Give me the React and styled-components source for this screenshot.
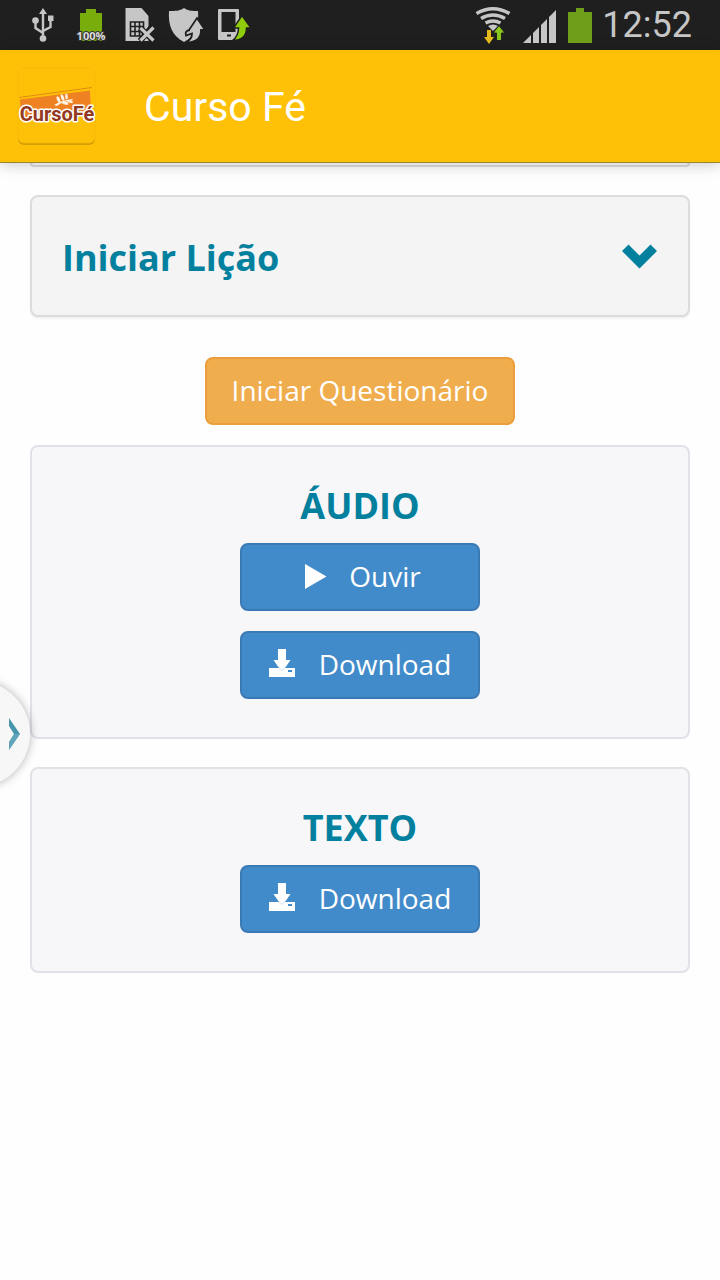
import React from "react";
import styled, { createGlobalStyle } from "styled-components";

const GlobalStyle = createGlobalStyle`
  * { box-sizing: border-box; }
  body {
    margin: 0;
    background: #fefefe;
    font-family: "Open Sans", "Noto Sans", sans-serif;
  }
  button { font-family: inherit; cursor: pointer; }
`;

const TopBars = styled.div`
  position: sticky;
  top: 0;
  z-index: 2;
`;

const StatusBar = styled.div`
  display: flex;
  justify-content: space-between;
  height: 50px;
  padding: 0 28px;
  background: #1f1f1f;
`;

const StatusGroup = styled.div`
  display: flex;
  align-items: center;
  gap: ${(p) => p.$gap}px;
`;

const Clock = styled.time`
  color: #c6c6c6;
  font: 400 36px/48px Roboto, sans-serif;
`;

const AppBar = styled.header`
  display: flex;
  align-items: center;
  gap: 48px;
  height: 113px;
  padding: 2px 16px 0;
  background: #ffc107;
  border-bottom: 1px solid #9c8434;
  box-shadow: 0 2px 14px rgba(0, 0, 0, 0.2);
`;

const AppTitle = styled.h1`
  margin: 0;
  color: #fff;
  font: 400 41px/48px Roboto, sans-serif;
`;

const Content = styled.main`
  padding: 0 30px 30px;
`;

const PreviousPanel = styled.div`
  height: 4px;
  border: 2px solid #dddddf;
  border-top: 0;
  border-radius: 0 0 8px 8px;
`;

const AccordionButton = styled.button`
  display: flex;
  align-items: center;
  justify-content: space-between;
  width: 100%;
  height: 122px;
  margin: 28px 0 40px;
  padding: 2px 30px 0;
  background: #f4f4f4;
  border: 2px solid #dcdcdd;
  border-radius: 8px;
  box-shadow: 0 2px 2px rgba(0, 0, 0, 0.05);
  color: #04809f;
  font-size: 36px;
  font-weight: 700;
`;

const Button = styled.button`
  display: flex;
  align-items: center;
  justify-content: center;
  gap: 22px;
  width: ${(p) => p.$width}px;
  max-width: 100%;
  height: 68px;
  margin: 0 auto;
  padding: 0 0 2px;
  background: ${(p) => (p.$warning ? "#f0ad4e" : "#428bca")};
  border: 2px solid ${(p) => (p.$warning ? "#eb9f3c" : "#3a7ab4")};
  border-radius: 8px;
  color: #fff;
  font-size: 28px;
`;

const MediaPanel = styled.section`
  display: flex;
  flex-direction: column;
  gap: 20px;
  margin-top: ${(p) => p.$space}px;
  padding: 38px 20px;
  background: #f7f7f9;
  border: 2px solid #e1e1e8;
  border-radius: 8px;
`;

const PanelTitle = styled.h2`
  margin: 0 0 -4px;
  color: #04809f;
  font-size: 36px;
  line-height: 42px;
  text-align: center;
`;

const DrawerHandle = styled.button`
  position: fixed;
  left: -76px;
  top: 681px;
  z-index: 1;
  display: flex;
  align-items: center;
  justify-content: flex-end;
  width: 106px;
  height: 106px;
  padding: 0 9px 0 0;
  background: #f7f7f7;
  border: 0;
  border-radius: 50%;
  box-shadow: 0 0 10px rgba(0, 0, 0, 0.3);
`;

const LogoText = styled.text`
  font: 700 20px Roboto, sans-serif;
  fill: #93391f;
  stroke: #fff;
  stroke-width: 3px;
  stroke-linejoin: round;
  paint-order: stroke;
`;

const BatteryText = styled.text`
  font: 700 11px "Open Sans", sans-serif;
  fill: #ddd;
  stroke: #333;
  stroke-width: 2px;
  paint-order: stroke;
`;

const GREY = "#c6c6c6";

const UsbIcon = () => (
  <svg width="48" height="50" viewBox="28 0 48 50" aria-hidden="true">
    <g fill="none" stroke={GREY} strokeWidth="2.4">
      <path d="M43 12V37M43 33L35.500 28V21M43 31L50.500 27V18" />
    </g>
    <path fill={GREY} d="M43 8l4 6h-8zM48 15.500h5.500v5.500H48z" />
    <circle cx="35.500" cy="20.500" r="3.300" fill={GREY} />
    <circle cx="43" cy="38.500" r="3.300" fill={GREY} />
  </svg>
);

const BatteryChargeIcon = () => (
  <svg width="47" height="50" viewBox="76 0 47 50" role="img" aria-label="100%">
    <path fill="#78ad0c" d="M80 13h6V9h10v4h6v28H80z" />
    <BatteryText x="91" y="40" textAnchor="middle">100%</BatteryText>
  </svg>
);

const SimIcon = () => (
  <svg width="45" height="50" viewBox="123 0 45 50" aria-hidden="true">
    <path fill={GREY} d="M125.500 8h16l7 8v25h-23z" />
    <path fill="none" stroke="#1f1f1f" strokeWidth="1.600" d="M130.500 22h13v14h-13zM130.500 26.500h13M130.500 31.500h13M135 22v14M139.500 22v14" />
    <path stroke="#1f1f1f" strokeWidth="6" d="M140 28l13 12M152 27l-12 14" />
    <path stroke={GREY} strokeWidth="3.200" d="M140.500 28l13 12.500M153.500 27.500l-13 13" />
  </svg>
);

const ShieldIcon = () => (
  <svg width="49" height="50" viewBox="168 0 49 50" aria-hidden="true">
    <path fill={GREY} d="M184 8c4 3 9 3 14 3 1 14-2 25-14 31-12-6-16-17-15-31 6 0 11 0 15-3z" />
    <path fill={GREY} stroke="#1f1f1f" strokeWidth="1.800" d="M197 18l8 12h-4c0 8-4 12-15 12.500 4-2 6-5 6-9l-6 2c-1-3 0-5 4-5.500h-1z" />
  </svg>
);

const PhoneIcon = () => (
  <svg width="34" height="50" viewBox="217 0 34 50" aria-hidden="true">
    <path fill={GREY} fillRule="evenodd" d="M219 9h19a1 1 0 0 1 1 1v30h-20a1 1 0 0 1-1-1V10a1 1 0 0 1 1-1zM221.500 12v20h14V12zM227 34.500v2h4v-2z" />
    <path fill="#8fcc0b" stroke="#1f1f1f" strokeWidth="1.500" d="M242 15.500l9 12.500h-4.500c0 8-5 12.500-14 12.500 4-3 6-7 6-12.500h-5z" />
  </svg>
);

const WifiIcon = () => (
  <svg width="38" height="50" viewBox="476 0 38 50" aria-hidden="true">
    <g fill="none" stroke={GREY} strokeWidth="3.400">
      <path d="M478.500 13.500Q495 4 511.500 13.500" />
      <path d="M483 18.500Q495 11.500 507 18.500" />
      <path d="M487.500 23Q495 19 502.500 23" />
    </g>
    <path fill={GREY} d="M490 26q5-3 10 0l-5 5z" />
    <path fill="#e5b91c" d="M489 30h4v7h3l-5 7-5-7h3z" />
    <path fill="#8ac51a" stroke="#1f1f1f" strokeWidth="1" d="M501 25.500l6 7.500h-3.500v7.500h-5V33H495z" />
  </svg>
);

const SignalIcon = () => (
  <svg width="34" height="50" viewBox="525 0 34 50" aria-hidden="true">
    <path fill={GREY} d="M526 43l8-8v8zM536 33l6-6v16h-6zM544 25l6-6v24h-6zM552 17l7-7V43H552z" />
  </svg>
);

const BatteryIcon = () => (
  <svg width="26" height="50" viewBox="567 0 26 50" aria-hidden="true">
    <path fill="#6f9e18" d="M569 12h8V8h8v4h8v31h-24z" />
  </svg>
);

const LogoIcon = () => (
  <svg width="80" height="84" viewBox="16 66 80 84" role="img" aria-label="Curso Fé">
    <rect x="18" y="71" width="77" height="75" rx="6" fill="#c08c00" opacity=".65" />
    <rect x="18" y="69" width="77" height="75" rx="6" fill="#ffc107" stroke="#f5b70b" strokeWidth=".6" />
    <path fill="#ee8122" d="M20 100.500L90 91.500l1 20-70 8z" />
    <path fill="none" stroke="#d87d16" strokeWidth=".8" d="M19 98.500L92 88.500" />
    <g fill="#fff3df">
      <path d="M54 106q8-5 19-6l-1 1.500q-9 .5-15 5.500z" />
      <ellipse cx="58.500" cy="100.500" rx="1.500" ry="3.400" transform="rotate(-25 58.500 100.500)" />
      <ellipse cx="62.500" cy="98.500" rx="1.500" ry="3.400" transform="rotate(-20 62.500 98.500)" />
      <ellipse cx="66.500" cy="97.500" rx="1.300" ry="3" transform="rotate(-5 66.500 97.500)" />
      <ellipse cx="65" cy="104" rx="1.500" ry="3.600" transform="rotate(-75 65 104)" />
      <ellipse cx="70" cy="102.500" rx="1.300" ry="3.200" transform="rotate(-75 70 102.500)" />
    </g>
    <LogoText x="57" y="122" textAnchor="middle">CursoFé</LogoText>
  </svg>
);

const ChevronDownIcon = () => (
  <svg width="36" height="36" viewBox="0 0 36 36" aria-hidden="true">
    <path fill="#04809f" d="M6.500 5.500l11 11 11-11L35 12 17.500 29.500 0 12z" />
  </svg>
);

const PlayIcon = () => (
  <svg width="28" height="28" viewBox="0 0 28 28" aria-hidden="true">
    <path fill="#fff" d="M6 2l21.500 12.500L6 27z" />
  </svg>
);

const DownloadIcon = () => (
  <svg width="28" height="32" viewBox="0 0 28 32" aria-hidden="true">
    <path fill="#fff" d="M9 1h8v11h4.500L16 20h10v9H0v-9h10l-5.500-8H9z" />
    <path fill="none" stroke="#428bca" strokeWidth="1" d="M7 19.500h2.500L13 22.500l3.500-3H19" opacity=".25" />
    <path fill="#428bca" d="M19 22h4v2h-4z" />
  </svg>
);

const DrawerArrowIcon = () => (
  <svg width="13" height="34" viewBox="0 0 13 34" aria-hidden="true">
    <path fill="#4795ad" d="M1 1l11 16L1 33v-8l5-8-5-8z" />
    <path fill="#79b3c5" d="M6 17h6L1 33v-8z" opacity=".5" />
  </svg>
);

export default function App() {
  return (
    <>
      <GlobalStyle />
      <TopBars>
        <StatusBar>
          <StatusGroup $gap={0}>
            <UsbIcon />
            <BatteryChargeIcon />
            <SimIcon />
            <ShieldIcon />
            <PhoneIcon />
          </StatusGroup>
          <StatusGroup $gap={10}>
            <WifiIcon />
            <SignalIcon />
            <BatteryIcon />
            <Clock>12:52</Clock>
          </StatusGroup>
        </StatusBar>
        <AppBar>
          <LogoIcon />
          <AppTitle>Curso Fé</AppTitle>
        </AppBar>
      </TopBars>
      <Content>
        <PreviousPanel />
        <AccordionButton type="button" aria-expanded="false">
          Iniciar Lição
          <ChevronDownIcon />
        </AccordionButton>
        <Button type="button" $warning $width={310}>Iniciar Questionário</Button>
        <MediaPanel $space={20}>
          <PanelTitle>ÁUDIO</PanelTitle>
          <Button type="button" $width={240}>
            <PlayIcon />
            Ouvir
          </Button>
          <Button type="button" $width={240}>
            <DownloadIcon />
            Download
          </Button>
        </MediaPanel>
        <MediaPanel $space={28}>
          <PanelTitle>TEXTO</PanelTitle>
          <Button type="button" $width={240}>
            <DownloadIcon />
            Download
          </Button>
        </MediaPanel>
      </Content>
      <DrawerHandle type="button" aria-label="Abrir menu">
        <DrawerArrowIcon />
      </DrawerHandle>
    </>
  );
}
